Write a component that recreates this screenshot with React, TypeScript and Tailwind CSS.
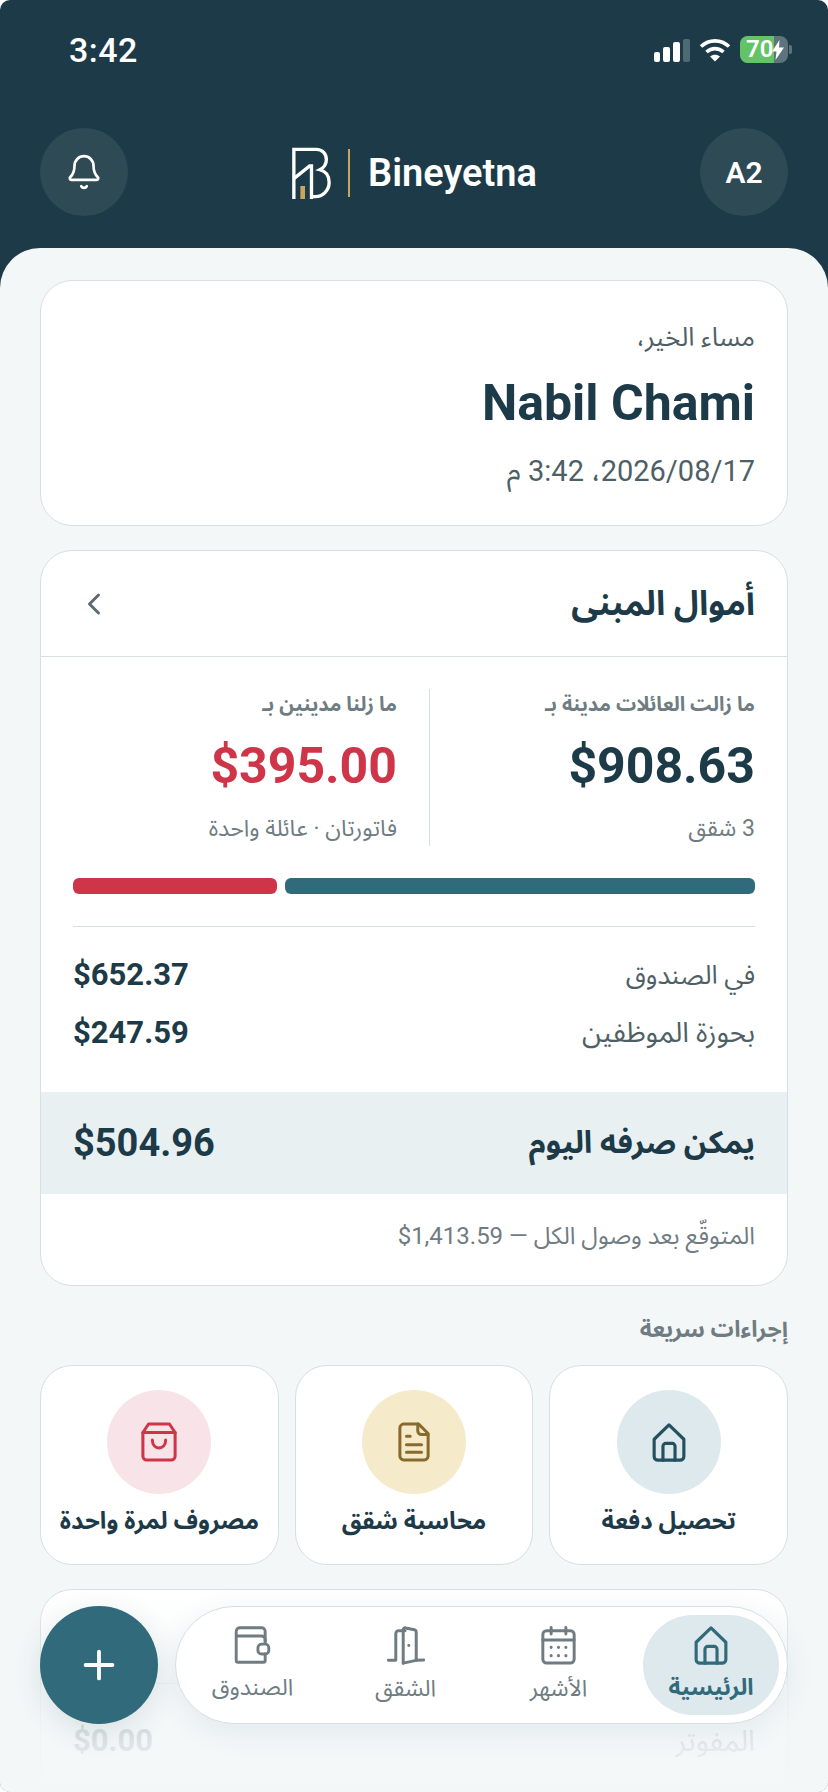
import React from "react";
import { Bell, ChevronLeft, Plus } from "lucide-react";

const quickActions = [
	{ label: "تحصيل دفعة", circle: "bg-[#dde9ed]", icon: <HomeIcon className="w-[36px] h-[39px] text-[#24505f]" /> },
	{ label: "محاسبة شقق", circle: "bg-[#f5ebcb]", icon: <FileIcon className="w-[32px] h-[40px] text-[#8a6a2c]" /> },
	{ label: "مصروف لمرة واحدة", circle: "bg-[#f8e3e8]", icon: <BagIcon className="w-[36px] h-[40px] text-[#cf3549]" /> },
];

function HomeIcon({ className }: { className?: string }) {
	return (
		<svg viewBox="0 0 38 42" fill="none" stroke="currentColor" strokeWidth="3.4" strokeLinejoin="round" strokeLinecap="round" className={className}>
			<path d="M3 17.500 19 2l16 15.500V36a4 4 0 0 1-4 4H7a4 4 0 0 1-4-4Z" />
			<path d="M12.500 40V25a3 3 0 0 1 3-3h7a3 3 0 0 1 3 3v15" />
		</svg>
	);
}

function FileIcon({ className }: { className?: string }) {
	return (
		<svg viewBox="0 0 34 42" fill="none" stroke="currentColor" strokeWidth="3.2" strokeLinejoin="round" strokeLinecap="round" className={className}>
			<path d="M22 2H6a4 4 0 0 0-4 4v30a4 4 0 0 0 4 4h22a4 4 0 0 0 4-4V12Z" />
			<path d="M21 2v7a4 4 0 0 0 4 4h7" />
			<path d="M9 15h4M9 24h16M9 32h16" />
		</svg>
	);
}

function BagIcon({ className }: { className?: string }) {
	return (
		<svg viewBox="0 0 38 42" fill="none" stroke="currentColor" strokeWidth="3.2" strokeLinejoin="round" strokeLinecap="round" className={className}>
			<path d="M8 2h22l6 9v25a4 4 0 0 1-4 4H6a4 4 0 0 1-4-4V11Z" />
			<path d="M2 11h34" />
			<path d="M12 19c0 11 14 11 14 0" />
		</svg>
	);
}

function CalendarIcon({ className }: { className?: string }) {
	return (
		<svg viewBox="0 0 38 42" fill="none" stroke="currentColor" strokeWidth="3.2" strokeLinecap="round" strokeLinejoin="round" className={className}>
			<rect x="2" y="5" width="34" height="35" rx="4" />
			<path d="M2 15h34M11 1.500v7M27 1.500v7" />
			<path d="M11 23h.01M19 23h.01M27 23h.01M11 32h.01M19 32h.01M27 32h.01" strokeWidth="3.4" />
		</svg>
	);
}

function DoorIcon({ className }: { className?: string }) {
	return (
		<svg viewBox="0 0 42 42" fill="none" stroke="currentColor" strokeWidth="3.2" strokeLinecap="round" strokeLinejoin="round" className={className}>
			<path d="M2 37h8V8a3 3 0 0 1 3-3h7" />
			<path d="M18 40V4a2 2 0 0 1 2.600-1.900L30 4a3 3 0 0 1 2 3v30l8-.5" />
			<path d="M18 40l14-3" />
			<path d="M24 21h.01" />
		</svg>
	);
}

function WalletIcon({ className }: { className?: string }) {
	return (
		<svg viewBox="0 0 40 42" fill="none" stroke="currentColor" strokeWidth="3.2" strokeLinecap="round" strokeLinejoin="round" className={className}>
			<path d="M34 18V6a4 4 0 0 0-4-4H6a4 4 0 0 0-4 4v32a2 2 0 0 0 2 2h28a2 2 0 0 0 2-2v-7" />
			<path d="M2 11h28a4 4 0 0 1 4 4v3" />
			<rect x="26" y="20" width="12" height="11" rx="4" />
		</svg>
	);
}

function Logo() {
	return (
		<svg viewBox="0 0 44 56" fill="none" className="w-[41px] h-[52px]">
			<path d="M3 56V2.500h24c7 0 11 5 11 11 0 5-3 9-7 11 6 1.500 10 6 10 13.500 0 9-7 15.500-15 15.500H23" stroke="#fff" strokeWidth="3.6" />
			<path d="M3 34 20 20.500h2V56" stroke="#fff" strokeWidth="3.6" />
			<rect x="10" y="42" width="5" height="14" fill="#c9a55f" />
		</svg>
	);
}

function StatusBar() {
	return (
		<div className="h-[100px] pt-[31px] pl-[69px] pr-[36px] flex justify-between items-start" dir="ltr">
			<span className="text-[34px] leading-[38px] font-medium text-white tracking-[0.5px]">3:42</span>
			<div className="flex items-center gap-[9px] pt-[5px]">
				<div className="flex items-end gap-[3px] h-[25px]">
					<div className="w-[6px] h-[10px] rounded-[2px] bg-white" />
					<div className="w-[7px] h-[15px] rounded-[2px] bg-white" />
					<div className="w-[7px] h-[20px] rounded-[2px] bg-white" />
					<div className="w-[7px] h-[23px] rounded-[2px] bg-[#4f6a75]" />
				</div>
				<svg viewBox="0 0 32 24" className="w-[32px] h-[24px]" fill="none" stroke="#fff" strokeWidth="3.6">
					<path d="M2 8.500c8-7.500 20-7.500 28 0" />
					<path d="M7.500 14c5-4.500 12-4.500 17 0" />
					<path d="M16 23.500l-5-5c3-2.500 7-2.500 10 0Z" fill="#fff" stroke="none" />
				</svg>
				<div className="flex items-center gap-[1px]">
					<div className="relative w-[48px] h-[27px] rounded-[8px] bg-[#5f737c] overflow-hidden flex items-center">
						<div className="absolute inset-y-0 left-0 w-[34px] bg-[#62c466]" />
						<span className="relative pl-[6px] w-[32px] text-[24px] leading-[27px] font-semibold text-white">70</span>
						<svg viewBox="0 0 12 20" className="relative w-[12px] h-[20px] shrink-0" fill="#fff">
							<path d="M7.500 0 0 11.500h4.500L3.500 20 12 7.500H7Z" />
						</svg>
					</div>
					<div className="w-[3px] h-[9px] rounded-r-[2px] bg-[#5f737c]" />
				</div>
			</div>
		</div>
	);
}

function Header() {
	return (
		<div className="h-[148px] px-[40px] pt-[28px] flex justify-between items-start" dir="ltr">
			<button className="w-[88px] h-[88px] rounded-full bg-[#2e4a55] flex items-center justify-center">
				<Bell className="w-[38px] h-[38px] text-white" strokeWidth={1.7} />
			</button>
			<div className="flex items-center pt-[19px]">
				<Logo />
				<div className="w-[2px] h-[48px] bg-[#c9a55f] ml-[16px] mr-[18px]" />
				<span className="text-[38px] leading-[52px] font-semibold text-white">Bineyetna</span>
			</div>
			<div className="w-[88px] h-[88px] rounded-full bg-[#2e4a55] flex items-center justify-center text-[30px] font-semibold text-white">
				A2
			</div>
		</div>
	);
}

function GreetingCard() {
	return (
		<section className="h-[246px] bg-white rounded-[32px] border border-[#d5e0e3] px-[32px] pt-[39px]">
			<p className="text-[26px] leading-[34px] text-[#4f5f66]">مساء الخير،</p>
			<h1 className="mt-[18px] text-[50px] leading-[62px] font-bold text-[#1c3a47]">Nabil Chami</h1>
			<p className="mt-[20px] text-[29px] leading-[34px] text-[#4f5f66]">2026/08/17، 3:42 م</p>
		</section>
	);
}

function MoneyCard() {
	return (
		<section className="mt-[24px] h-[736px] bg-white rounded-[32px] border border-[#d5e0e3] overflow-hidden">
			<div className="h-[106px] px-[32px] flex items-center justify-between border-b border-[#d5e0e3]">
				<h2 className="text-[34px] font-bold text-[#1c3a47]">أموال المبنى</h2>
				<ChevronLeft className="w-[36px] h-[36px] text-[#5b6b72] ml-[3px]" strokeWidth={2} />
			</div>
			<div className="px-[32px] pt-[32px]">
				<div className="grid grid-cols-[326px_1fr] h-[157px]">
					<div className="pl-[32px] border-l border-[#d5e0e3]">
						<p className="text-[20px] leading-[30px] font-bold text-[#6f7c82]">ما زالت العائلات مدينة بـ</p>
						<p className="mt-[16px] text-[50px] leading-[62px] font-bold text-[#1c3a47]">$908.63</p>
						<p className="mt-[16px] text-[23px] leading-[32px] text-[#6f7c82]">3 شقق</p>
					</div>
					<div className="pr-[32px]">
						<p className="text-[20px] leading-[30px] font-bold text-[#6f7c82]">ما زلنا مدينين بـ</p>
						<p className="mt-[16px] text-[50px] leading-[62px] font-bold text-[#cf3549]">$395.00</p>
						<p className="mt-[16px] text-[23px] leading-[32px] text-[#6f7c82]">فاتورتان · عائلة واحدة</p>
					</div>
				</div>
				<div className="mt-[32px] flex gap-[8px] h-[16px]">
					<div className="w-[470px] rounded-[6px] bg-[#316b7b]" />
					<div className="flex-1 rounded-[6px] bg-[#cf3549]" />
				</div>
				<div className="mt-[32px] border-t border-[#d5e0e3] pt-[30px] flex flex-col gap-[22px]">
					<div className="flex justify-between items-center h-[36px]">
						<span className="text-[26px] text-[#4f5f66]">في الصندوق</span>
						<span className="text-[31px] font-bold text-[#1c3a47]">$652.37</span>
					</div>
					<div className="flex justify-between items-center h-[36px]">
						<span className="text-[28px] text-[#4f5f66]">بحوزة الموظفين</span>
						<span className="text-[31px] font-bold text-[#1c3a47]">$247.59</span>
					</div>
				</div>
			</div>
			<div className="mt-[41px] h-[102px] bg-[#e9f0f2] px-[32px] flex items-center justify-between">
				<span className="text-[31px] font-bold text-[#1c3a47]">يمكن صرفه اليوم</span>
				<span className="text-[38px] font-bold text-[#1c3a47]">$504.96</span>
			</div>
			<p className="px-[32px] pt-[27px] text-[24px] leading-[30px] text-[#6f7c82]">
				المتوقّع بعد وصول الكل — <bdi dir="ltr">$1,413.59</bdi>
			</p>
		</section>
	);
}

function QuickActions() {
	return (
		<section className="mt-[28px]">
			<h3 className="text-[23px] leading-[32px] font-bold text-[#6f7c82]">إجراءات سريعة</h3>
			<div className="mt-[19px] grid grid-cols-3 gap-[16px]">
				{quickActions.map((action) => (
					<div key={action.label} className="h-[200px] bg-white rounded-[32px] border border-[#d5e0e3] pt-[24px] flex flex-col items-center">
						<div className={`w-[104px] h-[104px] rounded-full flex items-center justify-center ${action.circle}`}>{action.icon}</div>
						<p className="mt-[9px] text-[24px] leading-[36px] font-bold text-[#1c3a47] whitespace-nowrap">{action.label}</p>
					</div>
				))}
			</div>
		</section>
	);
}

function BottomNav() {
	return (
		<div className="absolute left-[40px] right-[40px] top-[1606px] flex gap-[17px]" dir="ltr">
			<button className="w-[118px] h-[118px] rounded-full bg-[#316b7b] flex items-center justify-center shadow-[0_8px_30px_rgba(28,58,71,0.12)]">
				<Plus className="w-[46px] h-[46px] text-white" strokeWidth={2} />
			</button>
			<nav className="flex-1 h-[118px] rounded-full bg-white border border-[#d5e0e3] shadow-[0_8px_30px_rgba(28,58,71,0.08)] flex items-center pr-[8px]">
				{[
					{ label: "الصندوق", icon: <WalletIcon className="w-[37px] h-[38px]" /> },
					{ label: "الشقق", icon: <DoorIcon className="w-[40px] h-[39px]" /> },
					{ label: "الأشهر", icon: <CalendarIcon className="w-[35px] h-[39px]" /> },
				].map((item) => (
					<div key={item.label} className="w-[153px] flex flex-col items-center text-[#6f7c82]">
						{item.icon}
						<span className="mt-[8px] text-[23px] leading-[32px]">{item.label}</span>
					</div>
				))}
				<div className="flex-1 ml-[8px] h-[100px] rounded-full bg-[#dde9ed] flex flex-col items-center justify-center text-[#316b7b]">
					<HomeIcon className="w-[36px] h-[39px]" />
					<span className="mt-[7px] text-[23px] leading-[32px] font-bold">الرئيسية</span>
				</div>
			</nav>
		</div>
	);
}

export default function App() {
	return (
		<div className="relative w-[828px] h-[1792px] overflow-hidden rounded-[10px] bg-[#1c3a47] font-['Roboto','Noto_Sans','Noto_Sans_Arabic','DejaVu_Sans',sans-serif]">
			<StatusBar />
			<Header />
			<main dir="rtl" className="h-[1544px] bg-[#f3f7f8] rounded-t-[40px] px-[40px] pt-[32px]">
				<GreetingCard />
				<MoneyCard />
				<QuickActions />
				<section className="mt-[24px] h-[260px] bg-white rounded-[32px] border border-[#d5e0e3] overflow-hidden">
					<div className="h-[94px] border-b border-[#d5e0e3]" />
					<div className="px-[32px] pt-[34px] flex justify-between items-center">
						<span className="text-[29px] text-[#4f5f66]">المفوتر</span>
						<span className="text-[31px] font-bold text-[#1c3a47]">$0.00</span>
					</div>
				</section>
			</main>
			<div className="absolute left-0 right-0 bottom-0 h-[200px] bg-gradient-to-b from-[#f3f7f8]/0 via-[#f3f7f8]/80 to-[#f3f7f8]" />
			<BottomNav />
		</div>
	);
}
